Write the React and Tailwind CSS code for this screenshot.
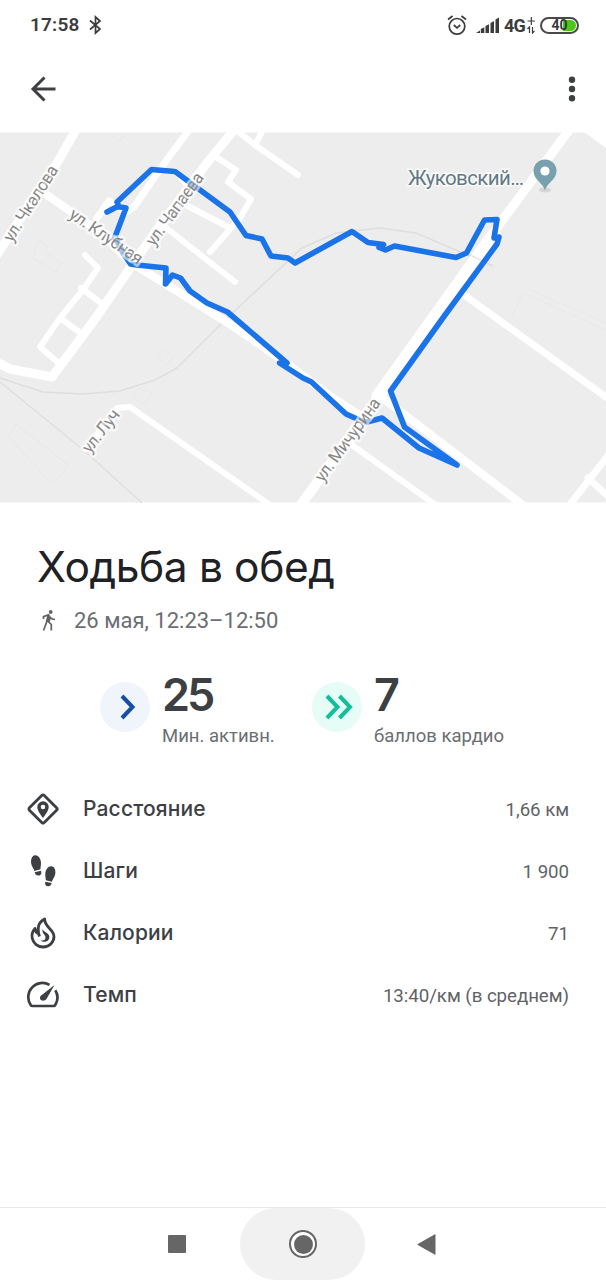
import React from "react";

const ROADS = [
  { w: 9, d: "M76 130L57 163L-4 256" },
  { w: 8, d: "M47 195L100 232L130 262L172 288L228 323L285 362L326 393L362 417" },
  { w: 9, d: "M234 130L207 163L153 235L95 319L52 377L10 369L-3 362" },
  { w: 7, d: "M189 130L163 165L134 207L126 212L109 201L97 218" },
  { w: 6, d: "M236 130L255 145L298 175M263 130L255 145" },
  { w: 6, d: "M213 155L236 170L228 182L251 199L240 218L210 252" },
  { w: 6, d: "M175 171L190 188M182 203L230 228M165 227L235 282" },
  { w: 6, d: "M85 255L98 268L83 290L60 318L40 347L60 364M81 288L101 303M60 318L82 334" },
  { w: 6, d: "M86 449L117 408L130 407L270 505" },
  { w: 9, d: "M569 130L490 237" },
  { w: 13, d: "M494 234L378 396" },
  { w: 10, d: "M388 385L300 506" },
  { w: 8, d: "M380 396L524 506" },
  { w: 6, d: "M345 440L437 506" },
  { w: 7, d: "M460 292L610 400" },
  { w: 7, d: "M610 453L568 507M588 478L610 498" },
];

const ROUTE =
  "M107 212L117.5 206.5L126 208L115 237L123 253L130.5 264L137 265L166 268L165.5 284L172.5 275L180.5 278L190 291L207 303L227.5 312L287 363L279.5 363L303 378L311.5 382L346 414L365 422.5L382 418L419 448L457 465L404.5 427L390.5 391L445 315L497 244L499 237L494 238L497 219.5L484.5 220L466.5 253L456 257.5L394.5 246L385.5 250L379 247.5L383.5 244.5L368 242.5L352 231.5L295 263L288 258L271 256L262 239L246 235.5L230 212L175 171.5L151.5 169.5L117 202L119 207";

const STREETS = [
  { t: "ул. Чкалова", x: 12, y: 243, a: -57.5, len: 87 },
  { t: "ул. Клубная", x: 68, y: 217, a: 34.5, len: 85 },
  { t: "ул. Чапаева", x: 154, y: 247, a: -54, len: 86 },
  { t: "ул. Луч", x: 90, y: 454, a: -52, len: 50 },
  { t: "ул. Мичурина", x: 323, y: 483, a: -54, len: 99 },
];

function RouteMap() {
  return (
    <svg className="block h-[371px] w-full shrink-0" viewBox="0 132 606 371">
      <rect x="0" y="132.5" width="606" height="370" fill="#ededed" />
      <g fill="none" stroke="#e8e8e8" strokeWidth="1">
        <path d="M110 133L118 142L126 135M38 240L48 246L45 252L62 263L56 272L33 258ZM8 436L16 424L68 465L54 483L45 477ZM158 358L162 349L174 356L167 366ZM133 398L138 388L152 393L145 404ZM512 315L523 293L606 330M530 290L606 323" />
      </g>
      <path d="M0 378L43 392L82 394L120 391L155 380L177 368L227 318L302 248L336 233L380 228L416 233L493 266" fill="none" stroke="#dedede" strokeWidth="1.5" />
      <path d="M0 382L87 453L142 503" fill="none" stroke="#dfdfdf" strokeWidth="1.5" />
      <g fill="none" stroke="#fff" strokeLinejoin="round" strokeLinecap="round">
        {ROADS.map((r) => (
          <path key={r.d} d={r.d} strokeWidth={r.w} />
        ))}
      </g>
      <path d="M584 132H606V148Z" fill="#fff" />
      <path d="M462 251L493 266" fill="none" stroke="#dedede" strokeWidth="1.2" />
      <path d={ROUTE} fill="none" stroke="#1a73e8" strokeWidth="5.6" strokeLinejoin="round" strokeLinecap="round" />
      <g fontFamily="Roboto, sans-serif" fontSize="17" fill="#858585">
        {STREETS.map((s) => (
          <text key={s.t} transform={`translate(${s.x} ${s.y}) rotate(${s.a})`} textLength={s.len} stroke="#fff" strokeOpacity="0.6" strokeWidth="5" strokeLinejoin="round" paintOrder="stroke">
            {s.t}
          </text>
        ))}
      </g>
      <text x="408" y="185" fontFamily="Roboto, sans-serif" fontSize="20.5" fill="#627984" textLength="116" stroke="#fff" strokeOpacity="0.7" strokeWidth="3" paintOrder="stroke">
        Жуковский…
      </text>
      <ellipse cx="545" cy="190" rx="6" ry="2.5" fill="#d5d5d5" />
      <path d="M545 190.500C543.500 183 533.500 180 533.500 171A11.500 11.500 0 0 1 556.500 171C556.500 180 546.500 183 545 190.500Z" fill="#78a0ae" />
      <circle cx="545" cy="171" r="4.600" fill="#fff" />
    </svg>
  );
}

function StatusBar() {
  return (
    <div className="flex h-[50px] shrink-0 items-center justify-between pr-[27px] pl-[30px] text-[#3c3c3c]">
      <div className="flex items-center gap-[9px]">
        <span className="text-[19px] font-semibold tracking-[0.2px]">17:58</span>
        <svg className="h-[20px] w-[13px]" viewBox="0 0 13 20" fill="none" stroke="currentColor" strokeWidth="1.7">
          <path d="M1 5.500L11 14L6.500 18V2L11 6L1 14.500" />
        </svg>
      </div>
      <div className="flex items-center">
        <svg className="h-[22px] w-[20px]" viewBox="0 0 20 22" fill="none" stroke="currentColor" strokeWidth="1.700">
          <circle cx="10" cy="12.300" r="7.800" />
          <path d="M6.800 11L10 13.800L13.200 11M1 5.500L5.500 2M19 5.500L14.500 2" />
        </svg>
        <svg className="ml-[9px] h-[17px] w-[23px]" viewBox="0 0 23 17" fill="currentColor">
          <path d="M0 16L4 13.500V16ZM4.800 12L8.300 10.300V16H4.800ZM9.500 9L13 7.300V16H9.500ZM14.500 6L18 4V16H14.500ZM19.500 2.500L23 .500V16H19.500Z" />
        </svg>
        <span className="ml-[5px] text-[18px] font-bold tracking-[-0.8px]">4G</span>
        <svg className="ml-[2px] h-[17px] w-[8px]" viewBox="0 0 8 17" fill="none" stroke="currentColor" strokeWidth="1.200">
          <path d="M4.300 0V8M.500 4H8M2.500 16V10L.500 12M5.500 10V16L7.500 14" />
        </svg>
        <div className="ml-[5px] h-[17px] w-[39px] rounded-full border-2 border-[#4a4a4a] p-px">
          <div className="flex h-full w-full items-center justify-center rounded-full bg-[linear-gradient(to_right,transparent_60%,#4fc516_60%)]">
            <span className="text-[14px] leading-[16px] font-semibold text-[#333]">40</span>
          </div>
        </div>
      </div>
    </div>
  );
}

function AppBar() {
  return (
    <div className="flex h-[82px] shrink-0 items-center justify-between pr-[30px] pb-[4px] pl-[30px] text-[#3c4043]">
      <svg className="h-[26px] w-[26px]" viewBox="0 0 26 26" fill="none" stroke="currentColor" strokeWidth="3">
        <path d="M25.500 13H3M14.500 1.500L3 13L14.500 24.500" />
      </svg>
      <svg className="h-[26px] w-[8px]" viewBox="0 0 8 26" fill="currentColor">
        <circle cx="4" cy="3.800" r="3.200" />
        <circle cx="4" cy="13" r="3.200" />
        <circle cx="4" cy="22.300" r="3.200" />
      </svg>
    </div>
  );
}

function WalkIcon() {
  return (
    <svg className="h-[21px] w-[14px]" viewBox="0 0 14 21" fill="none" stroke="#5f6368" strokeWidth="1.700">
      <circle cx="8.700" cy="2" r="1.900" fill="#5f6368" stroke="none" />
      <path d="M1.500 9V6.700L6.500 4.800L8.300 7.700Q10 9.500 13 9.500M6.200 5L4.300 13L1.500 20.500M8.200 7.500L6.800 12L9.300 14.500V20.500" />
      <path d="M5.500 5L8 6L6.800 12.500L4.300 12Z" fill="#5f6368" stroke="none" />
    </svg>
  );
}

function Stat({ value, label, badge, children }) {
  return (
    <div className="flex w-[212px] items-start gap-[12px]">
      <div className={`mt-[10px] flex h-[50px] w-[50px] shrink-0 items-center justify-center rounded-full ${badge}`}>{children}</div>
      <div className="-mt-[4px]">
        <div className="h-[53px] font-['Inter',sans-serif] text-[45px] leading-[53px] font-semibold tracking-[-3px] text-[#3c4043]">{value}</div>
        <div className="pt-[3px] text-[18.5px] leading-[24px] whitespace-nowrap text-[#6b6e72]">{label}</div>
      </div>
    </div>
  );
}

function DistanceIcon() {
  return (
    <svg className="h-[34px] w-[34px]" viewBox="0 0 34 34">
      <rect x="6.500" y="6.500" width="21" height="21" rx="1.800" transform="rotate(45 17 17)" fill="none" stroke="#3c4043" strokeWidth="2.800" />
      <path d="M17 26C14 21.500 11.300 18.500 11.300 15A5.700 5.700 0 0 1 22.700 15C22.700 18.500 20 21.500 17 26ZM17 12.700A2.300 2.300 0 1 0 17 17.300A2.300 2.300 0 1 0 17 12.700Z" fill="#3c4043" fillRule="evenodd" />
    </svg>
  );
}

function StepsIcon() {
  return (
    <svg className="h-[34px] w-[34px]" viewBox="0 0 34 34" fill="#3c4043">
      <path d="M9 1.200C12.500 .800 15 5 15 9C15 12 14.300 13.700 14.500 15.300L8.400 17C7.800 14.500 5 12 5 7.500C5 4 6.500 1.500 9 1.200Z" />
      <path d="M8.700 18.300L15 16.700C16 20 14.500 21.300 12.700 21.500C10.600 21.700 9 20.500 8.700 18.300Z" />
      <path d="M25.500 12.200C28.300 12.500 29.600 15.500 29.400 18.500C29.200 23 26.500 25 26 27.700L19.800 26.300C20 24 19 22.500 19.300 19.500C19.700 15.500 22 11.900 25.500 12.200Z" />
      <path d="M19.300 27.700L25.600 29.100C25.200 31.500 23.500 32.600 21.600 32.300C19.700 32 18.600 30.300 19.300 27.700Z" />
    </svg>
  );
}

function FlameIcon() {
  return (
    <svg className="h-[34px] w-[34px]" viewBox="0 0 34 34" fill="none" stroke="#3c4043" strokeWidth="2.800" strokeLinejoin="round">
      <path d="M18.700 3C11.500 7 11.800 12 12.600 17.500C10.500 17 9.300 14.500 9 12.500C6 16 5.600 19 6.200 22C7.200 27.500 12 31 17 31C23 31 28 26.500 28 20.500C28 13 18.500 11.500 18.700 3Z" />
      <path d="M16.500 13.300C15.800 18 19.500 18.500 19.500 21.500C19.500 24 17 25.500 14.500 24C16 27 23.300 26.500 23.300 21C23.300 17 18 16.500 16.500 13.300Z" fill="#3c4043" stroke="none" />
      <path d="M12.600 17.500L13.500 20.500" />
    </svg>
  );
}

function PaceIcon() {
  return (
    <svg className="h-[34px] w-[34px]" viewBox="0 0 34 34" fill="none" stroke="#3c4043" strokeWidth="2.700">
      <path d="M23.500 6.900A14.100 14.100 0 0 0 4.600 26.800Q5.200 28 6.500 28H27.500Q28.800 28 29.400 26.800A14.100 14.100 0 0 0 29.300 12.300" />
      <path d="M28.500 7L20.500 21C18.500 23.500 14.500 23 14 20.500C13.800 19 14.500 18 15.500 17.300Z" fill="#3c4043" stroke="none" />
    </svg>
  );
}

const METRICS = [
  { label: "Расстояние", value: "1,66 км", Icon: DistanceIcon },
  { label: "Шаги", value: "1 900", Icon: StepsIcon },
  { label: "Калории", value: "71", Icon: FlameIcon },
  { label: "Темп", value: "13:40/км (в среднем)", Icon: PaceIcon },
];

function NavBar() {
  return (
    <div className="flex h-[73px] shrink-0 items-center border-t border-[#e8e8e8] pl-[168px]">
      <div className="h-[18px] w-[18px] rounded-[1px] bg-[#666]" />
      <div className="ml-[54px] flex h-[72px] w-[125px] items-center justify-center rounded-[40px] bg-[#f1f1f1]">
        <div className="ml-[1px] flex h-[28px] w-[28px] items-center justify-center rounded-full border-2 border-[#666] bg-white">
          <div className="h-[19px] w-[19px] rounded-full bg-[#666]" />
        </div>
      </div>
      <svg className="ml-[52px] h-[21px] w-[19px]" viewBox="0 0 19 21" fill="#666">
        <path d="M.800 10L17.500 .500Q18.500 0 18.500 1V20Q18.500 21 17.500 20.500L.800 11Q0 10.500 .800 10Z" />
      </svg>
    </div>
  );
}

export default function App() {
  return (
    <div className="flex h-[1280px] w-[606px] flex-col overflow-hidden bg-white font-['Roboto',sans-serif]">
      <StatusBar />
      <AppBar />
      <RouteMap />
      <main className="flex flex-1 flex-col">
        <h1 className="mt-[37px] h-[54px] pl-[37px] font-['Inter',sans-serif] text-[42.5px] leading-[54px] tracking-[-0.4px] whitespace-nowrap text-[#202124]">Ходьба в обед</h1>
        <div className="mt-[10px] flex h-[32px] items-center gap-[18px] pl-[42px] text-[22px] tracking-[0px] text-[#6b6e72]">
          <WalkIcon />
          <span>26 мая, 12:23–12:50</span>
        </div>
        <div className="mt-[36px] flex h-[106px] pl-[100px]">
          <Stat value="25" label="Мин. активн." badge="bg-[#f0f5fb]">
            <svg className="ml-[5px] h-[26px] w-[16px]" viewBox="0 0 16 26" fill="none" stroke="#174ea6" strokeWidth="4">
              <path d="M2 2L12.500 13L2 24" />
            </svg>
          </Stat>
          <Stat value="7" label="баллов кардио" badge="bg-[#e6fcf6]">
            <svg className="ml-[3px] h-[26px] w-[28px]" viewBox="0 0 28 26" fill="none" stroke="#11bf9a" strokeWidth="4">
              <path d="M2 2L12.500 13L2 24M14.500 2L25 13L14.500 24" />
            </svg>
          </Stat>
        </div>
        <div className="flex flex-col pr-[37px] pl-[26px]">
          {METRICS.map(({ label, value, Icon }) => (
            <div key={label} className="flex h-[62px] items-center">
              <Icon />
              <span className="ml-[23px] flex-1 font-['Inter',sans-serif] text-[21px] font-medium tracking-[0.15px] text-[#3c4043]">{label}</span>
              <span className="pt-[2px] text-[18.7px] tracking-[-0.05px] text-[#5f6368]">{value}</span>
            </div>
          ))}
        </div>
      </main>
      <NavBar />
    </div>
  );
}
